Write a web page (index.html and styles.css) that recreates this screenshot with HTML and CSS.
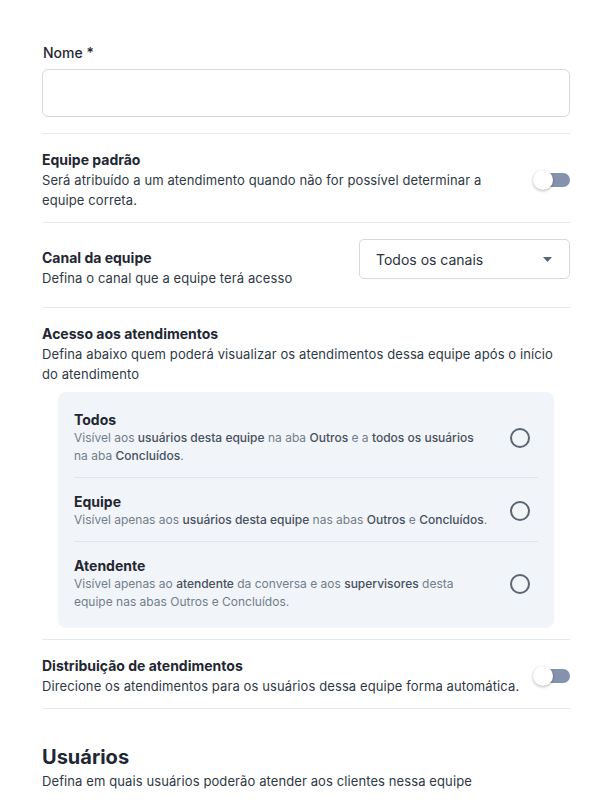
FILE: index.html
```html
<!DOCTYPE html>
<html lang="pt-BR">
<head>
  <meta charset="UTF-8" />
  <meta name="viewport" content="width=device-width, initial-scale=1.0" />
  <title>Equipe</title>
  <link rel="stylesheet" href="styles.css">
</head>
<body>
  <div class="container">
    <div class="field">
      <label for="nome">Nome *</label>
      <input type="text" id="nome">
    </div>

    <div class="row">
      <div class="row-text">
        <h3>Equipe padrão</h3>
        <p>Será atribuído a um atendimento quando não for possível determinar a equipe correta.</p>
      </div>
      <span class="toggle"><span class="knob"></span></span>
    </div>

    <div class="row channel">
      <div class="row-text">
        <h3>Canal da equipe</h3>
        <p>Defina o canal que a equipe terá acesso</p>
      </div>
      <div class="select">
        <span>Todos os canais</span>
        <svg width="9" height="5" viewBox="0 0 9 5"><path d="M0 0h9L4.5 5z" fill="#5b6573"/></svg>
      </div>
    </div>

    <div class="row block">
      <div class="row-text">
        <h3>Acesso aos atendimentos</h3>
        <p>Defina abaixo quem poderá visualizar os atendimentos dessa equipe após o início do atendimento</p>
      </div>
      <div class="options">
        <div class="option">
          <div class="option-text">
            <h4>Todos</h4>
            <p>Visível aos <b>usuários desta equipe</b> na aba <b>Outros</b> e a <b>todos os usuários</b> na aba <b>Concluídos</b>.</p>
          </div>
          <span class="radio"></span>
        </div>
        <div class="option">
          <div class="option-text">
            <h4>Equipe</h4>
            <p>Visível apenas aos <b>usuários desta equipe</b> nas abas <b>Outros</b> e <b>Concluídos</b>.</p>
          </div>
          <span class="radio"></span>
        </div>
        <div class="option">
          <div class="option-text">
            <h4>Atendente</h4>
            <p>Visível apenas ao <b>atendente</b> da conversa e aos <b>supervisores</b> desta equipe nas abas Outros e Concluídos.</p>
          </div>
          <span class="radio"></span>
        </div>
      </div>
    </div>

    <div class="row">
      <div class="row-text">
        <h3>Distribuição de atendimentos</h3>
        <p>Direcione os atendimentos para os usuários dessa equipe forma automática.</p>
      </div>
      <span class="toggle"><span class="knob"></span></span>
    </div>

    <div class="section">
      <h2>Usuários</h2>
      <p>Defina em quais usuários poderão atender aos clientes nessa equipe</p>
    </div>
  </div>
</body>
</html>
```

FILE: styles.css
```css
body {
  margin: 0;
  font-family: Inter, "Noto Sans", sans-serif;
  background-color: #fff;
  color: #1f2733;
}
.container {
  padding: 43px 40px 0 42px;
}
.field {
  padding-bottom: 16px;
}
.field label {
  display: block;
  font-size: 14px;
  line-height: 20px;
  font-weight: 500;
  margin-bottom: 6px;
  padding-left: 1px;
}
.field input {
  display: block;
  width: 100%;
  box-sizing: border-box;
  height: 48px;
  border: 1px solid #d3d9df;
  border-radius: 6px;
  outline: none;
}
.row {
  display: flex;
  align-items: center;
  justify-content: space-between;
  gap: 11px;
  border-top: 1px solid #e6e9ed;
  padding: 16px 0 12px;
}
.row.block {
  display: block;
  padding-bottom: 11px;
}
.row.channel {
  align-items: flex-start;
  padding-bottom: 19px;
}
.row.channel .row-text {
  padding-top: 9px;
}
.row-text {
  flex: 1;
}
.row-text h3 {
  margin: 0;
  font-size: 14px;
  line-height: 20px;
  font-weight: 700;
}
.row-text p {
  margin: 0;
  font-size: 13px;
  line-height: 20px;
  letter-spacing: 0.1px;
  color: #2f3945;
}
/* interruptor desligado */
.toggle {
  position: relative;
  flex-shrink: 0;
  width: 32px;
  height: 14px;
  margin-left: 5px;
  border-radius: 7px;
  background-color: #8592ad;
}
.knob {
  position: absolute;
  left: -5px;
  top: -3px;
  width: 20px;
  height: 20px;
  border-radius: 50%;
  background-color: #fff;
  box-shadow: 0 1px 3px rgba(0, 0, 0, 0.3);
}
.select {
  display: flex;
  align-items: center;
  justify-content: space-between;
  flex-shrink: 0;
  box-sizing: border-box;
  width: 211px;
  height: 40px;
  padding: 0 17px 0 16px;
  border: 1px solid #d3d9df;
  border-radius: 5px;
  font-size: 14px;
  color: #2a323c;
}
.options {
  margin: 8px 16px 0;
  padding: 4px 16px 5px;
  background-color: #f1f4f8;
  border-radius: 8px;
}
.option {
  display: flex;
  align-items: center;
  justify-content: space-between;
  gap: 22px;
  padding: 14px 0 12px;
}
.option + .option {
  border-top: 1px solid #e2e6ec;
}
.option-text h4 {
  margin: 0;
  font-size: 14px;
  line-height: 19px;
  font-weight: 700;
}
.option-text p {
  margin: 0;
  font-size: 12px;
  line-height: 18px;
  color: #737e8c;
}
.option-text b {
  font-weight: 500;
  color: #475160;
}
.radio {
  flex-shrink: 0;
  width: 16px;
  height: 16px;
  border: 2px solid #5b6573;
  border-radius: 50%;
  margin-right: 8px;
}
.section {
  border-top: 1px solid #e6e9ed;
  padding-top: 36px;
}
.section h2 {
  margin: 0 0 2px;
  font-size: 20px;
  line-height: 24px;
  font-weight: 700;
}
.section p {
  margin: 0;
  font-size: 13px;
  line-height: 20px;
  letter-spacing: 0.1px;
  color: #2f3945;
}
```
